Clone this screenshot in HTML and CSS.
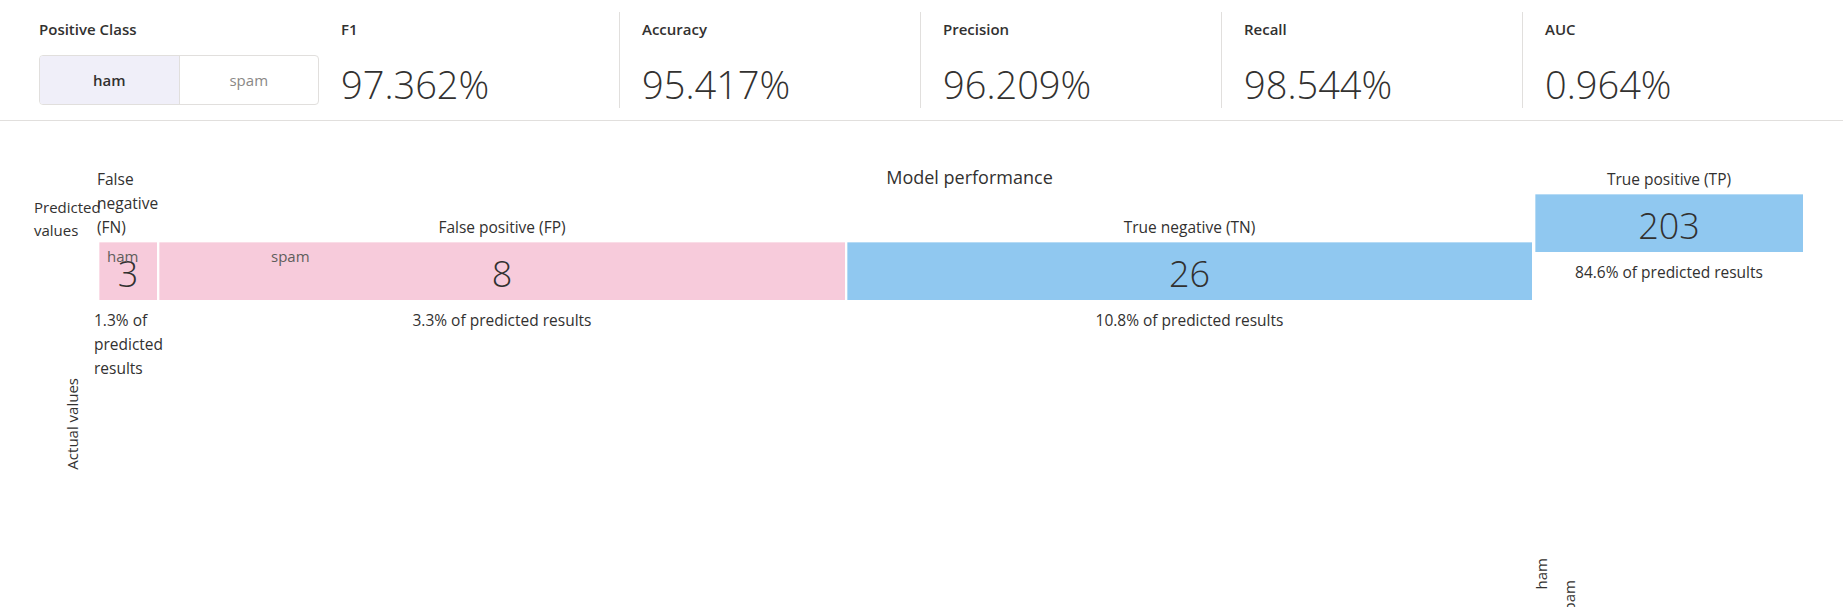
FILE: index.html
```html
<!DOCTYPE html>
<html lang="en">
<head>
<meta charset="utf-8">
<title>Model performance</title>
<link rel="stylesheet" href="styles.css">
</head>
<body>
<div class="header">
  <div class="pos-class">
    <div class="label">Positive Class</div>
    <div class="toggle">
      <div class="seg active">ham</div>
      <div class="seg">spam</div>
    </div>
  </div>
  <div class="metric"><div class="label">F1</div><div class="value">97.362%</div></div>
  <div class="metric"><div class="label">Accuracy</div><div class="value">95.417%</div></div>
  <div class="metric"><div class="label">Precision</div><div class="value">96.209%</div></div>
  <div class="metric"><div class="label">Recall</div><div class="value">98.544%</div></div>
  <div class="metric"><div class="label">AUC</div><div class="value">0.964%</div></div>
</div>
<div class="chart">
  <div class="title">Model performance</div>
  <div class="axis-pred">Predicted values</div>
  <div class="axis-actual">Actual values</div>
  <div class="tick tick-ham">ham</div>
  <div class="tick tick-spam">spam</div>
  <div class="vtick vtick-ham">ham</div>
  <div class="vtick vtick-spam">spam</div>
  <div class="cells">
    <div class="cell fn">
      <div class="cell-label">False negative (FN)</div>
      <div class="bar pink">3</div>
      <div class="note">1.3% of predicted results</div>
    </div>
    <div class="cell fp">
      <div class="cell-label">False positive (FP)</div>
      <div class="bar pink">8</div>
      <div class="note">3.3% of predicted results</div>
    </div>
    <div class="cell tn">
      <div class="cell-label">True negative (TN)</div>
      <div class="bar blue">26</div>
      <div class="note">10.8% of predicted results</div>
    </div>
    <div class="cell tp">
      <div class="cell-label">True positive (TP)</div>
      <div class="bar blue">203</div>
      <div class="note">84.6% of predicted results</div>
    </div>
  </div>
</div>
</body>
</html>
```
FILE: styles.css
```css
html, body {
  margin: 0;
  padding: 0;
  overflow: hidden;
  background: #ffffff;
}
body {
  font-family: "Open Sans", "Segoe UI", sans-serif;
  color: #323130;
}
.header {
  display: flex;
  height: 96px;
  padding: 12px 0;
  border-bottom: 1px solid #e1dfdd;
}
.pos-class {
  width: 280px;
  padding-left: 39px;
}
.label {
  font-size: 15px;
  font-weight: 600;
  line-height: 20px;
  margin-top: 7px;
  color: #323130;
}
.toggle {
  display: flex;
  box-sizing: border-box;
  width: 280px;
  height: 50px;
  margin-top: 16px;
  border: 1px solid #e1dfdd;
  border-radius: 4px;
  overflow: hidden;
}
.seg {
  flex: 1;
  display: flex;
  align-items: center;
  justify-content: center;
  font-size: 15px;
  color: #8a8886;
}
.seg.active {
  background: #f0eff9;
  font-weight: 600;
  color: #323130;
  border-right: 1px solid #e1dfdd;
}
.metric {
  box-sizing: border-box;
  width: 301px;
  padding-left: 22px;
  border-right: 1px solid #e1dfdd;
}
.metric:last-child {
  border-right: none;
}
.value {
  font-size: 38px;
  font-weight: 300;
  line-height: 38px;
  margin-top: 26px;
  color: #323130;
}
.chart {
  position: relative;
  padding: 46px 0 0 99px;
  height: 440px;
}
.title {
  position: absolute;
  top: 44px;
  left: 99px;
  right: 3px;
  text-align: center;
  font-size: 18px;
  line-height: 24px;
}
.cells {
  display: flex;
  align-items: flex-start;
}
.cell {
  display: flex;
  flex-direction: column;
}
.cell-label {
  font-size: 15.5px;
  line-height: 24px;
  padding-bottom: 3px;
  text-align: center;
  white-space: nowrap;
}
.fn { width: 58px; }
.fp { width: 686px; margin-left: 2px; margin-top: 48px; }
.tn { width: 685px; margin-left: 2px; margin-top: 48px; }
.tp { width: 268px; margin-left: 3px; }
.fn .cell-label {
  text-align: left;
  width: 66px;
  margin-left: -2px;
  white-space: normal;
}
.bar {
  height: 58px;
  display: flex;
  align-items: center;
  justify-content: center;
  padding-top: 4px;
  box-sizing: border-box;
  font-size: 36px;
  font-weight: 300;
  color: #323130;
  box-shadow: inset 0 1px 0 rgba(255, 255, 255, 0.35), inset 1px 0 0 rgba(255, 255, 255, 0.35);
}
.pink { background: #f7cbdb; }
.blue { background: #90c8f0; }
.note {
  font-size: 15.5px;
  line-height: 24px;
  margin-top: 8px;
  text-align: center;
  white-space: nowrap;
}
.fn .note {
  text-align: left;
  width: 74px;
  margin-left: -5px;
  white-space: normal;
}
.axis-pred {
  position: absolute;
  left: 34px;
  top: 75px;
  width: 72px;
  font-size: 15px;
  line-height: 23px;
}
.tick {
  position: absolute;
  top: 123px;
  font-size: 15px;
  line-height: 24px;
  color: #605e5c;
}
.tick-ham { left: 107px; }
.tick-spam { left: 271px; }
.axis-actual {
  position: absolute;
  left: 60px;
  top: 257px;
  width: 24px;
  writing-mode: vertical-rl;
  transform: rotate(180deg);
  font-size: 15px;
  line-height: 24px;
  color: #323130;
}
.vtick {
  position: absolute;
  width: 24px;
  writing-mode: vertical-rl;
  transform: rotate(180deg);
  font-size: 15px;
  line-height: 24px;
  color: #323130;
}
.vtick-ham { left: 1529px; top: 437px; }
.vtick-spam { left: 1557px; top: 459px; }
```
